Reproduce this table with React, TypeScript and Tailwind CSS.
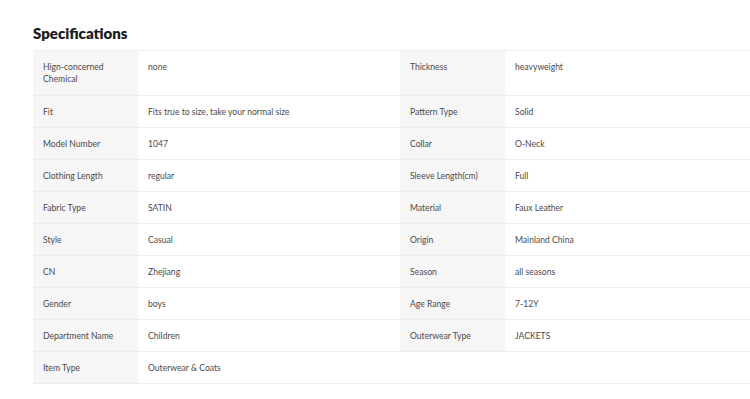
const rows: [string, string, string, string][] = [
  ["Hign-concerned Chemical", "none", "Thickness", "heavyweight"],
  ["Fit", "Fits true to size, take your normal size", "Pattern Type", "Solid"],
  ["Model Number", "1047", "Collar", "O-Neck"],
  ["Clothing Length", "regular", "Sleeve Length(cm)", "Full"],
  ["Fabric Type", "SATIN", "Material", "Faux Leather"],
  ["Style", "Casual", "Origin", "Mainland China"],
  ["CN", "Zhejiang", "Season", "all seasons"],
  ["Gender", "boys", "Age Range", "7-12Y"],
  ["Department Name", "Children", "Outerwear Type", "JACKETS"],
  ["Item Type", "Outerwear & Coats", "", ""],
];

export default function App() {
  return (
    <div className="w-[750px] h-[399px] overflow-hidden bg-white pl-[33px] pt-[24px] font-['Lato',sans-serif]">
      <h2 className="text-[15px] leading-[18px] font-extrabold text-[#1c1c1c] mb-[8px]">Specifications</h2>
      <div className="w-[760px] border-t border-[#efefef] text-[8.6px] leading-[12px] text-[#4a4a4a]">
        {rows.map(([l1, v1, l2, v2], i) => {
          const pad = i === 0 ? "px-[10px] pt-[10px] pb-[10px]" : "px-[10px] pt-[10px] pb-[9px]";
          return (
            <div key={i} className="flex border-b border-[#ededed]">
              <div className={`w-[105px] shrink-0 bg-[#f6f6f6] ${pad}`}>
                <div className={i === 0 ? "w-[70px]" : ""}>{l1}</div>
              </div>
              <div className={`w-[262px] shrink-0 ${pad}`}>{v1}</div>
              <div className={`w-[105px] shrink-0 ${pad} ${l2 ? "bg-[#f6f6f6]" : ""}`}>{l2}</div>
              <div className={`flex-1 ${pad}`}>{v2}</div>
            </div>
          );
        })}
      </div>
    </div>
  );
}
